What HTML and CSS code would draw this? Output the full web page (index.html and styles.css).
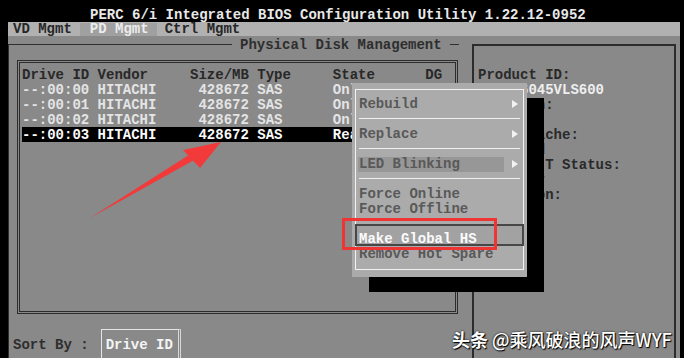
FILE: index.html
```
<!DOCTYPE html>
<html>
<head>
<meta charset="utf-8">
<link rel="stylesheet" href="styles.css">
</head>
<body>
<div class="screen">
  <div class="titlebar">PERC 6/i Integrated BIOS Configuration Utility 1.22.12-0952</div>
  <div class="body">
    <div class="workspace">
      <div class="tabs">
        <span class="tab tab-first">VD Mgmt</span>
        <span class="tab tab-active">PD Mgmt</span>
        <span class="tab">Ctrl Mgmt</span>
      </div>
      <div class="main">
        <fieldset class="pd-frame">
          <legend class="pd-title">Physical Disk Management</legend>
          <div class="disk-list">
            <div class="row head">Drive ID Vendor     Size/MB Type     State      DG</div>
            <div class="row data">--:00:00 HITACHI     428672 SAS      Online     00</div>
            <div class="row data">--:00:01 HITACHI     428672 SAS      Online     00</div>
            <div class="row data">--:00:02 HITACHI     428672 SAS      Online     00</div>
            <div class="row data sel">--:00:03 HITACHI     428672 SAS      Ready</div>
          </div>
          <div class="sort-row">
            <span class="sort-label">Sort By :</span>
            <span class="sort-box">Drive ID</span>
          </div>
        </fieldset>
        <div class="info">
          <div class="info-row">Product ID:</div>
          <div class="info-row value">HUS156045VLS600</div>
          <div class="info-row">Revision:</div>
          <div class="info-row">A5C0</div>
          <div class="info-row">Write Cache:</div>
          <div class="info-row">Disabled</div>
          <div class="info-row">S.M.A.R.T Status:</div>
          <div class="info-row">No Error</div>
          <div class="info-row">Operation:</div>
          <div class="info-row">None</div>
        </div>
      </div>
    </div>
  </div>

  <div class="menu">
    <div class="menu-inner">
      <div class="mi"><span class="mi-label">Rebuild</span><span class="mi-arrow"></span></div>
      <div class="msep"></div>
      <div class="mi"><span class="mi-label">Replace</span><span class="mi-arrow"></span></div>
      <div class="msep"></div>
      <div class="mi"><span class="mi-label mi-hl">LED Blinking</span><span class="mi-arrow"></span></div>
      <div class="msep"></div>
      <div class="mi"><span class="mi-label">Force Online</span></div>
      <div class="mi"><span class="mi-label">Force Offline</span></div>
      <div class="mi-selwrap"><div class="mi-sel">Make Global HS</div></div>
      <div class="mi"><span class="mi-label">Remove Hot Spare</span></div>
    </div>
  </div>

  <div class="redbox"></div>

  <svg class="arrow" width="684" height="358" viewBox="0 0 684 358">
    <polygon points="90,218 196,159 192,153" fill="#f23a3a"/>
    <polygon points="221,142 183,150 200,168" fill="#f23a3a"/>
  </svg>

  <div class="watermark"><span class="wm-brand">头条</span> @乘风破浪的风声WYF</div>
</div>
</body>
</html>
```

FILE: styles.css
```
html, body {
  margin: 0;
  padding: 0;
}

body {
  width: 684px;
  height: 358px;
  overflow: hidden;
  background: #000;
  font-family: "Liberation Mono", "DejaVu Sans Mono", monospace;
  font-size: 14px;
  font-weight: bold;
}

.screen {
  position: relative;
  width: 684px;
  height: 358px;
  display: flex;
  flex-direction: column;
  background: #000;
}

.titlebar {
  height: 22px;
  box-sizing: border-box;
  padding: 8px 0 0 90px;
  line-height: 14px;
  color: #e8e8e8;
  white-space: pre;
}

.body {
  flex: 1;
  display: flex;
  padding: 0 4px 0 8px;
  min-height: 0;
}

.workspace {
  flex: 1;
  display: flex;
  flex-direction: column;
  background: #898989;
}

.tabs {
  height: 14px;
  box-sizing: border-box;
  padding-top: 1px;
  line-height: 13px;
  background: #b1b1b1;
  display: flex;
}

.tab {
  padding: 0 8px;
  color: #262626;
  white-space: pre;
}

.tab-first {
  padding-left: 5px;
}

.tab-active {
  padding-left: 10px;
  background: #a0a0a0;
  color: #ececec;
}

.main {
  flex: 1;
  display: flex;
  align-items: flex-start;
  min-height: 0;
}

.pd-frame {
  margin: 0;
  padding: 0;
  width: 451px;
  box-sizing: border-box;
  min-width: 0;
  border: none;
  border-top: 1px solid #2f2f2f;
  border-left: 1px solid #2f2f2f;
  align-self: stretch;
}

.pd-title {
  margin-left: 223px;
  padding: 2px 8px 0 8px;
  line-height: 15px;
  color: #2e2e2e;
  white-space: pre;
}

.disk-list {
  margin: 7px 0 0 8px;
  width: 441px;
  height: 254px;
  box-sizing: border-box;
  border: 3px double #2c2c2c;
  padding: 4px 0 0 2px;
}

.row {
  height: 15px;
  box-sizing: border-box;
  padding-top: 1px;
  line-height: 15px;
  white-space: pre;
}

.head {
  color: #282828;
}

.data {
  color: #e4e4e4;
}

.sel {
  background: #000;
  color: #fafafa;
}

.sort-row {
  display: flex;
  align-items: flex-start;
  margin-top: 15px;
  padding-left: 4px;
}

.sort-label {
  padding-top: 9px;
  line-height: 15px;
  color: #2e2e2e;
  white-space: pre;
}

.sort-box {
  margin-left: 12px;
  width: 80px;
  height: 40px;
  box-sizing: border-box;
  border: 1px solid #e6e6e6;
  border-right: 3px double #d8d8d8;
  padding: 8px 0 0 4px;
  line-height: 15px;
  color: #f4f4f4;
  white-space: pre;
}

.info {
  margin: 8px 0 0 13px;
  width: 204px;
  box-sizing: border-box;
  align-self: stretch;
  border: 2px solid #2c2c2c;
  border-bottom: none;
  padding: 21px 0 0 4px;
}

.info-row {
  height: 15px;
  box-sizing: border-box;
  padding-top: 1px;
  line-height: 15px;
  white-space: pre;
  color: #2a2a2a;
}

.value {
  color: #eeeeee;
}

/* popup menu */
.menu {
  position: absolute;
  left: 352px;
  top: 83px;
  width: 175px;
  box-sizing: border-box;
  padding: 6px 3px 7px 3px;
  background: #ababab;
  box-shadow: 17px 15px 0 #000;
}

.menu-inner {
  border: 1px solid #f2f2f2;
  padding: 6px 0 8px 0;
}

.mi {
  height: 15px;
  box-sizing: border-box;
  padding: 1px 5px 0 3px;
  line-height: 15px;
  display: flex;
  align-items: center;
  color: #595959;
  white-space: pre;
}

.mi-hl {
  width: 145px;
  margin-left: -1px;
  padding-left: 1px;
  background: #979797;
}

.mi-arrow {
  margin-left: auto;
  width: 0;
  height: 0;
  border-left: 6px solid #f2f2f2;
  border-top: 4px solid transparent;
  border-bottom: 4px solid transparent;
}

.msep {
  height: 15px;
  display: flex;
  align-items: center;
  padding: 0 3px;
}

.msep::before {
  content: "";
  flex: 1;
  height: 1px;
  background: #f0f0f0;
}

.mi-selwrap {
  height: 30px;
  box-sizing: border-box;
  padding-top: 8px;
}

.mi-sel {
  height: 22px;
  box-sizing: border-box;
  margin: 0 -1px;
  border: 2px solid #474747;
  padding: 6px 0 0 2px;
  line-height: 15px;
  background: #a2a2a2;
  color: #fbfbfb;
  white-space: pre;
}

/* annotations */
.redbox {
  position: absolute;
  left: 342px;
  top: 218px;
  width: 155px;
  height: 32px;
  box-sizing: border-box;
  border: 3px solid #ef3434;
}

.arrow {
  position: absolute;
  left: 0;
  top: 0;
  pointer-events: none;
}

.watermark {
  position: absolute;
  left: 452px;
  top: 327px;
  font-family: "Noto Sans CJK SC", "Noto Sans", sans-serif;
  font-size: 18px;
  font-weight: 500;
  line-height: 24px;
  color: #ffffff;
  white-space: nowrap;
  text-shadow: 0 0 2px #000, 1px 1px 1px #000;
}

.wm-brand {
  font-weight: bold;
}
```
